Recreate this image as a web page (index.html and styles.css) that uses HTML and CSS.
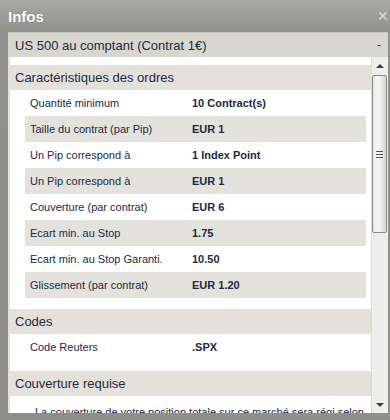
FILE: index.html
```html
<!DOCTYPE html>
<html lang="fr">
<head>
    <meta charset="UTF-8">
    <meta name="viewport" content="width=device-width, initial-scale=1.0">
    <title>Infos</title>
    <link rel="stylesheet" href="styles.css">
</head>
<body>
<div class="window">
    <div class="titlebar">
        <span class="title">Infos</span>
        <span class="close">&#x2715;</span>
    </div>
    <div class="panel">
        <div class="panel-head">
            <span>US 500 au comptant (Contrat 1€)</span>
            <span class="collapse">-</span>
        </div>
        <div class="panel-body">
            <div class="content">
                <h3 class="section">Caractéristiques des ordres</h3>
                <div class="rows">
                    <div class="row"><span class="label">Quantité minimum</span><span class="value">10 Contract(s)</span></div>
                    <div class="row"><span class="label">Taille du contrat (par Pip)</span><span class="value">EUR 1</span></div>
                    <div class="row"><span class="label">Un Pip correspond à</span><span class="value">1 Index Point</span></div>
                    <div class="row"><span class="label">Un Pip correspond à</span><span class="value">EUR 1</span></div>
                    <div class="row"><span class="label">Couverture (par contrat)</span><span class="value">EUR 6</span></div>
                    <div class="row"><span class="label">Ecart min. au Stop</span><span class="value">1.75</span></div>
                    <div class="row"><span class="label">Ecart min. au Stop Garanti.</span><span class="value">10.50</span></div>
                    <div class="row"><span class="label">Glissement (par contrat)</span><span class="value">EUR 1.20</span></div>
                </div>

                <h3 class="section">Codes</h3>
                <div class="rows">
                    <div class="row"><span class="label">Code Reuters</span><span class="value">.SPX</span></div>
                </div>

                <h3 class="section">Couverture requise</h3>
                <p class="note">La couverture de votre position totale sur ce marché sera régi selon les paliers suivants.</p>
            </div>
            <div class="scrollbar">
                <div class="arrow up"></div>
                <div class="track">
                    <div class="thumb"><span class="grip"></span></div>
                </div>
                <div class="arrow down"></div>
            </div>
        </div>
    </div>
</div>
</body>
</html>
```

FILE: styles.css
```css
body {
    margin: 0;
    font-family: "Liberation Sans", Arial, sans-serif;
    color: #1c2a44;
    background-color: #8f908b;
}
.window {
    width: 390px;
    height: 420px;
    display: flex;
    flex-direction: column;
    background: linear-gradient(#a8a9a4 0, #90918c 32px, #8f908b 100%);
    overflow: hidden;
}
.titlebar {
    height: 32px;
    flex: none;
    display: flex;
    align-items: center;
    justify-content: space-between;
    padding: 0 1px 0 8px;
}
.title {
    color: #ffffff;
    font-weight: bold;
    font-size: 15px;
    text-shadow: 0 0 1px rgba(0, 0, 0, 0.3);
}
.close {
    color: #d8d8d4;
    font-size: 14px;
}
.panel {
    flex: 1;
    min-height: 0;
    margin: 0 2px 7px 8px;
    display: flex;
    flex-direction: column;
    background-color: #e3e1da;
}
.panel-head {
    height: 25px;
    flex: none;
    display: flex;
    align-items: center;
    justify-content: space-between;
    padding: 0 7px;
    background-color: #d7d7d0;
    border-top: 1px solid #c4c4bd;
    box-sizing: border-box;
    font-size: 13px;
}
.collapse {
    font-size: 12px;
    color: #333333;
}
.panel-body {
    flex: 1;
    min-height: 0;
    display: flex;
    padding-left: 2px;
}
.content {
    flex: 1;
    overflow: hidden;
    background-color: #ffffff;
    padding-top: 8px;
}
.section {
    margin: 0;
    height: 25px;
    line-height: 25px;
    padding-left: 5px;
    background-color: #e3e1da;
    font-size: 13px;
    font-weight: normal;
}
.rows {
    margin: 0 5px 11px 15px;
}
.row {
    height: 26px;
    display: flex;
    align-items: center;
    font-size: 11px;
}
.row:nth-child(even) {
    background-color: #e4e2dc;
}
.label {
    width: 167px;
    padding-left: 5px;
    box-sizing: border-box;
}
.value {
    font-weight: bold;
}
.note {
    margin: 9px 4px 0 25px;
    font-size: 11px;
    line-height: 14px;
}
.scrollbar {
    width: 17px;
    flex: none;
    display: flex;
    flex-direction: column;
    background-color: #eeeeec;
    border-left: 1px solid #dcdcd8;
    box-sizing: border-box;
}
.arrow {
    height: 17px;
    flex: none;
    display: flex;
    justify-content: center;
    align-items: center;
}
.arrow::after {
    content: "";
    border-left: 4px solid transparent;
    border-right: 4px solid transparent;
}
.arrow.up::after {
    border-bottom: 4px solid #3c3c3c;
}
.arrow.down::after {
    border-top: 4px solid #3c3c3c;
}
.track {
    flex: 1;
}
.thumb {
    height: 156px;
    margin: 1px 1px 0 0;
    border: 1px solid #8a8a88;
    border-radius: 2px;
    background: linear-gradient(to right, #e8e8e8, #f8f8f8 40%, #d6d6d4);
    display: flex;
    justify-content: center;
    align-items: center;
}
.grip {
    width: 7px;
    height: 7px;
    background: repeating-linear-gradient(#555555 0, #555555 1px, transparent 1px, transparent 3px);
}
```
